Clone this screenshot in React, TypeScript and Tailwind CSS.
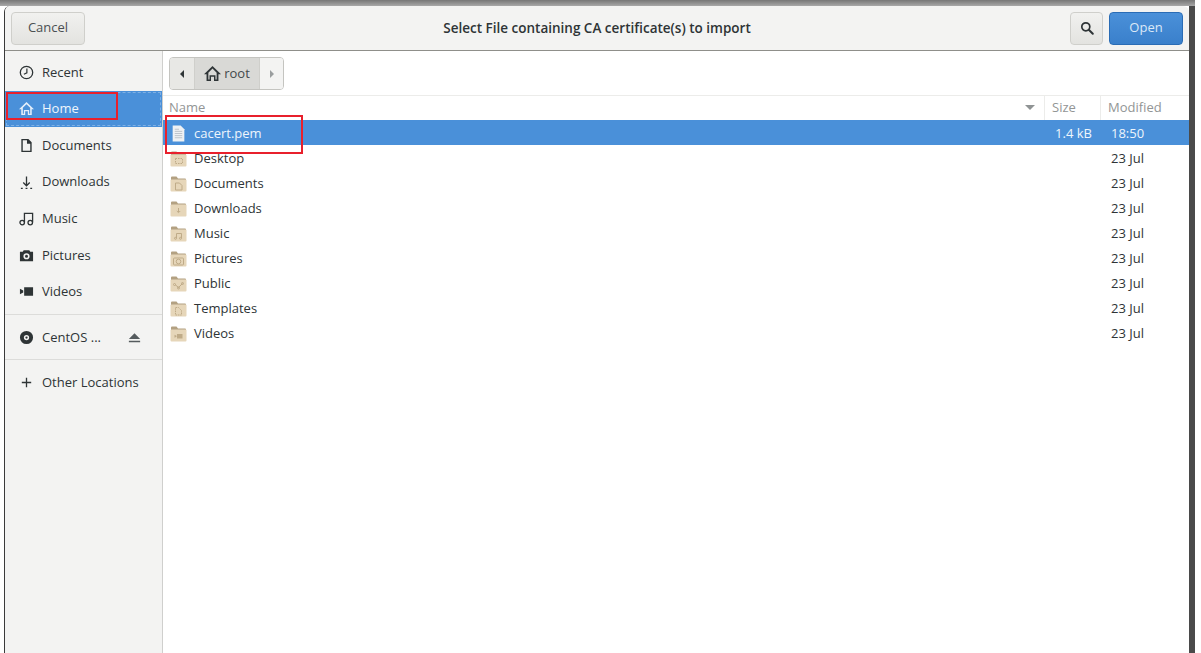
import { ReactNode } from 'react';

const textFont = "font-['Open_Sans','Noto_Sans',sans-serif]";

function Sym({ children, className = 'text-[#2e3436]', size = 15 }: { children: ReactNode; className?: string; size?: number }) {
  return (
    <svg width={size} height={size} viewBox="0 0 16 16" fill="currentColor" className={`shrink-0 ${className}`}>
      {children}
    </svg>
  );
}

const ClockIcon = () => (
  <Sym>
    <circle cx="8" cy="8" r="6.6" fill="none" stroke="currentColor" strokeWidth="1.4" />
    <path d="M8.400 3.800V8.400L5.200 9.800" fill="none" stroke="currentColor" strokeWidth="1.3" />
  </Sym>
);
const HomeIcon = ({ className, size }: { className?: string; size?: number }) => (
  <Sym className={className} size={size}>
    <path d="M8 1 0 8.800h2.400V15h4.200v-4h2.800v4h4.200V8.800H16z M8 3.400l3.900 3.800v6.400h-1.100V9.600H5.200v4H4.100V7.200z" fillRule="evenodd" />
  </Sym>
);
const DocIcon = () => (
  <Sym>
    <path d="M2.500 1h7.500l3.500 3.500V15h-11z M4 2.500v11h8V6H8.500V2.500z" fillRule="evenodd" />
  </Sym>
);
const DownloadIcon = () => (
  <Sym>
    <path d="M8 1.500v9.500M4.500 8l3.500 3.500L11.500 8" fill="none" stroke="currentColor" strokeWidth="1.4" />
    <path d="M2 13.500h2v1.500H2zM7 13.500h2v1.500H7zM12 13.500h2v1.500h-2z" />
  </Sym>
);
const MusicIcon = () => (
  <Sym>
    <path d="M5.800 12V2.500h8.700V12" fill="none" stroke="currentColor" strokeWidth="1.400" />
    <circle cx="3.400" cy="12.300" r="2.400" fill="none" stroke="currentColor" strokeWidth="1.400" />
    <circle cx="12" cy="12.300" r="2.400" fill="none" stroke="currentColor" strokeWidth="1.400" />
  </Sym>
);
const CameraIcon = () => (
  <Sym>
    <path
      d="M5 2.500h6l1 1.500h3v10H1V4h3z M8 5.500a3.300 3.300 0 1 0 0 6.600 3.300 3.300 0 0 0 0-6.600z M8 7.200a1.600 1.600 0 1 1 0 3.200 1.600 1.600 0 0 1 0-3.200z"
      fillRule="evenodd"
    />
  </Sym>
);
const VideoIcon = () => (
  <Sym>
    <path d="M5.500 3.500H15v9H5.500zM1 5l3.500 2v2L1 11z" />
  </Sym>
);
const DiscIcon = () => (
  <Sym>
    <path
      d="M8 1a7 7 0 1 0 0 14A7 7 0 0 0 8 1z M8 5.200a2.800 2.800 0 1 1 0 5.600 2.800 2.800 0 0 1 0-5.600z"
      fillRule="evenodd"
    />
    <circle cx="8" cy="8" r="1.200" />
  </Sym>
);
const EjectIcon = () => (
  <Sym className="text-[#555b5e]">
    <path d="M8 3.500 14 9.500H2zM2 11.500h12V13H2z" />
  </Sym>
);
const PlusIcon = () => (
  <Sym>
    <path d="M7.300 3h1.400v4.300H13v1.400H8.700V13H7.300V8.700H3V7.300h4.300z" />
  </Sym>
);

const ink = '#bfab88';
const emblems: Record<string, ReactNode> = {
  Desktop: <path d="M5.500 7.500h7v5h-7z" fill="none" stroke={ink} strokeWidth="1" strokeDasharray="1.500 1" />,
  Documents: <path d="M5.500 7h4l2.500 2.500V14h-6.500z" fill="none" stroke={ink} strokeWidth="1" />,
  Downloads: <path d="M8.500 7v4M6.800 10l1.700 1.700 1.700-1.700" fill="none" stroke={ink} strokeWidth="1" />,
  Music: (
    <g fill="none" stroke={ink} strokeWidth="1">
      <path d="M6.500 12V7.500h5V12" />
      <circle cx="5.500" cy="12.300" r="1" />
      <circle cx="10.500" cy="12.300" r="1" />
    </g>
  ),
  Pictures: (
    <g fill="none" stroke={ink} strokeWidth="1">
      <rect x="3.500" y="7" width="10" height="7" rx="1" />
      <circle cx="8.500" cy="10.500" r="2.300" />
    </g>
  ),
  Public: (
    <g fill="none" stroke={ink} strokeWidth="1">
      <path d="M5 8.500l3.500 3 4-4" />
      <circle cx="4.500" cy="8.500" r="1" />
      <circle cx="8.500" cy="12" r="1" />
      <circle cx="12.500" cy="7.500" r="1" />
    </g>
  ),
  Templates: <path d="M5.500 6.500h3l3 3V14h-6z" fill="none" stroke={ink} strokeWidth="1" strokeDasharray="1.500 0.800" />,
  Videos: <path d="M7 8h5.500v4.500H7zM4.500 8.800l2 1v1l-2 1z" fill={ink} />,
};

function FolderIcon({ name }: { name: string }) {
  return (
    <svg width="17" height="16" viewBox="0 0 17 16" className="shrink-0">
      <path d="M1 1.500a1 1 0 0 1 1-1h4.500l1.500 2h7a1 1 0 0 1 1 1V5H1z" fill="#b3a182" />
      <rect x="0.500" y="3.500" width="16" height="12" rx="1" fill="#e6d6b9" />
      {emblems[name]}
    </svg>
  );
}

const places: { label: string; icon: ReactNode }[] = [
  { label: 'Recent', icon: <ClockIcon /> },
  { label: 'Home', icon: <HomeIcon className="text-[#e4eefa]" /> },
  { label: 'Documents', icon: <DocIcon /> },
  { label: 'Downloads', icon: <DownloadIcon /> },
  { label: 'Music', icon: <MusicIcon /> },
  { label: 'Pictures', icon: <CameraIcon /> },
  { label: 'Videos', icon: <VideoIcon /> },
];

const folders = ['Desktop', 'Documents', 'Downloads', 'Music', 'Pictures', 'Public', 'Templates', 'Videos'];

function PlaceRow({ label, icon, active }: { label: string; icon: ReactNode; active?: boolean }) {
  return (
    <div
      className={`flex h-[36.6px] items-center gap-[8px] pl-[14px] text-[13px] ${
        active ? 'bg-[#4a90d9] text-[#f0f6fc] outline outline-1 -outline-offset-2 outline-dashed outline-[#7fb0e4]' : 'text-[#2e3436]'
      }`}
    >
      {icon}
      <span>{label}</span>
    </div>
  );
}

export default function App() {
  return (
    <div className={`relative flex h-[653px] w-[1201px] flex-col overflow-hidden bg-white ${textFont}`}>
      {/* gray strip of the desktop behind the dialog */}
      <div className="h-[6px] w-[1195px] shrink-0 bg-gradient-to-b from-[#777777] to-[#a8a8a8]" />

      <div className="flex min-h-0 flex-1">
        <div className="w-[4px] shrink-0 bg-white" />
        <div className="flex w-[1185px] shrink-0 flex-col overflow-hidden rounded-t-[6px] border-l border-[#3a3a3a] bg-white">
          {/* Header bar */}
          <div className="grid h-[45px] shrink-0 grid-cols-[1fr_auto_1fr] items-center border-b border-[#8f8f8a] bg-[#f3f3f2] px-[6px]">
            <button className="h-[33px] w-[74px] rounded-[4px] border border-[#cfcfcb] bg-gradient-to-b from-[#f1f1ef] to-[#e3e3e0] text-[13px] text-[#4a4f52]">
              Cancel
            </button>
            <div className="text-[13.5px] font-semibold text-[#2e3436]">Select File containing CA certificate(s) to import</div>
            <div className="flex items-center justify-end gap-[6px]">
              <button className="flex h-[33px] w-[33px] items-center justify-center rounded-[4px] border border-[#cfcfcb] bg-gradient-to-b from-[#f1f1ef] to-[#e3e3e0]">
                <svg width="16" height="16" viewBox="0 0 16 16" fill="none" stroke="#2e3436" strokeWidth="1.700">
                  <circle cx="6.800" cy="6.800" r="4" />
                  <path d="M9.800 9.800l4 4" strokeLinecap="round" strokeWidth="2" />
                </svg>
              </button>
              <button className="h-[33px] w-[74px] rounded-[4px] border border-[#2a6cb5] bg-gradient-to-b from-[#4a90d9] to-[#3a80cb] text-[13px] text-[#dbe8f7]">
                Open
              </button>
            </div>
          </div>

          <div className="flex min-h-0 flex-1">
            {/* Sidebar */}
            <div className="w-[158px] shrink-0 border-r border-[#cfcfcd] bg-[#f3f3f2] pt-[3px]">
              {places.map((p) => (
                <PlaceRow key={p.label} label={p.label} icon={p.icon} active={p.label === 'Home'} />
              ))}
              <div className="mt-[4px] border-t border-[#dcdcda]" />
              <div className="flex h-[44px] items-center gap-[8px] pl-[14px] pr-[20px] pt-[1px] text-[13px] text-[#2e3436]">
                <DiscIcon />
                <span className="flex-1">CentOS ...</span>
                <EjectIcon />
              </div>
              <div className="border-t border-[#dcdcda]" />
              <div className="flex h-[45px] items-center gap-[8px] pl-[14px] text-[13px] text-[#2e3436]">
                <PlusIcon />
                <span>Other Locations</span>
              </div>
            </div>

            {/* File list */}
            <div className="flex min-w-0 flex-1 flex-col bg-white">
              <div className="flex h-[45px] shrink-0 items-center border-b border-[#ececea] pl-[6px] pt-[1px]">
                <div className="flex h-[33px] items-stretch overflow-hidden rounded-[4px] border border-[#c4c4c0] text-[13px] text-[#43484b]">
                  <div className="flex w-[25px] items-center justify-center border-r border-[#cfcfcb] bg-[#e8e8e5]">
                    <svg width="8" height="10" viewBox="0 0 8 10" fill="#2e3436">
                      <path d="M6 1v8L2 5z" />
                    </svg>
                  </div>
                  <div className="flex w-[64px] items-center justify-center gap-[3px] bg-[#d9d9d6]">
                    <HomeIcon size={17} />
                    <span>root</span>
                  </div>
                  <div className="flex w-[24px] items-center justify-center border-l border-[#cfcfcb] bg-[#f3f3f2]">
                    <svg width="8" height="10" viewBox="0 0 8 10" fill="#9a9d9e">
                      <path d="M2 1v8l4-4z" />
                    </svg>
                  </div>
                </div>
              </div>

              <div className="flex h-[24px] shrink-0 items-stretch text-[13px] text-[#929595]">
                <div className="flex flex-1 items-center justify-between border-r border-[#ececea] pl-[6px] pr-[9px]">
                  <span>Name</span>
                  <svg width="10" height="6" viewBox="0 0 10 6" fill="#8f9394">
                    <path d="M0 0h10L5 5z" />
                  </svg>
                </div>
                <div className="flex w-[56px] items-center border-r border-[#ececea] pl-[7px]">Size</div>
                <div className="flex w-[88px] items-center pl-[7px]">Modified</div>
              </div>

              <div className="flex h-[25px] shrink-0 items-center bg-[#4a90d9] pt-[2px] text-[13px] text-[#eef5fc]">
                <div className="flex flex-1 items-center gap-[7px] pl-[7px]">
                  <svg width="17" height="17" viewBox="0 0 16 16" className="shrink-0">
                    <path d="M2.500 0.500h7.500l3.500 3.500V15.500h-11z" fill="#eef1f4" />
                    <path d="M4.500 6h7M4.500 8h7M4.500 10h7M4.500 12h7M4.500 4h4" stroke="#b5bcc4" strokeWidth="0.8" />
                  </svg>
                  <span>cacert.pem</span>
                </div>
                <div className="w-[56px] pr-[9px] text-right">1.4 kB</div>
                <div className="w-[88px] pl-[10px]">18:50</div>
              </div>

              {folders.map((f) => (
                <div key={f} className="flex h-[25px] shrink-0 items-center pt-[2px] text-[13px] text-[#2e3436]">
                  <div className="flex flex-1 items-center gap-[7px] pl-[7px]">
                    <FolderIcon name={f} />
                    <span>{f}</span>
                  </div>
                  <div className="w-[88px] pl-[10px]">23 Jul</div>
                </div>
              ))}
            </div>
          </div>
        </div>
        {/* dark strip right of the dialog */}
        <div className="w-[6px] shrink-0 bg-[#4a4a4a]" />
      </div>

      {/* red annotation boxes */}
      <div className="pointer-events-none absolute left-[6px] top-[92px] h-[28px] w-[112px] border-2 border-[#e8202c]" />
      <div className="pointer-events-none absolute left-[165px] top-[115px] h-[39px] w-[138px] border-2 border-[#e8202c]" />
    </div>
  );
}
